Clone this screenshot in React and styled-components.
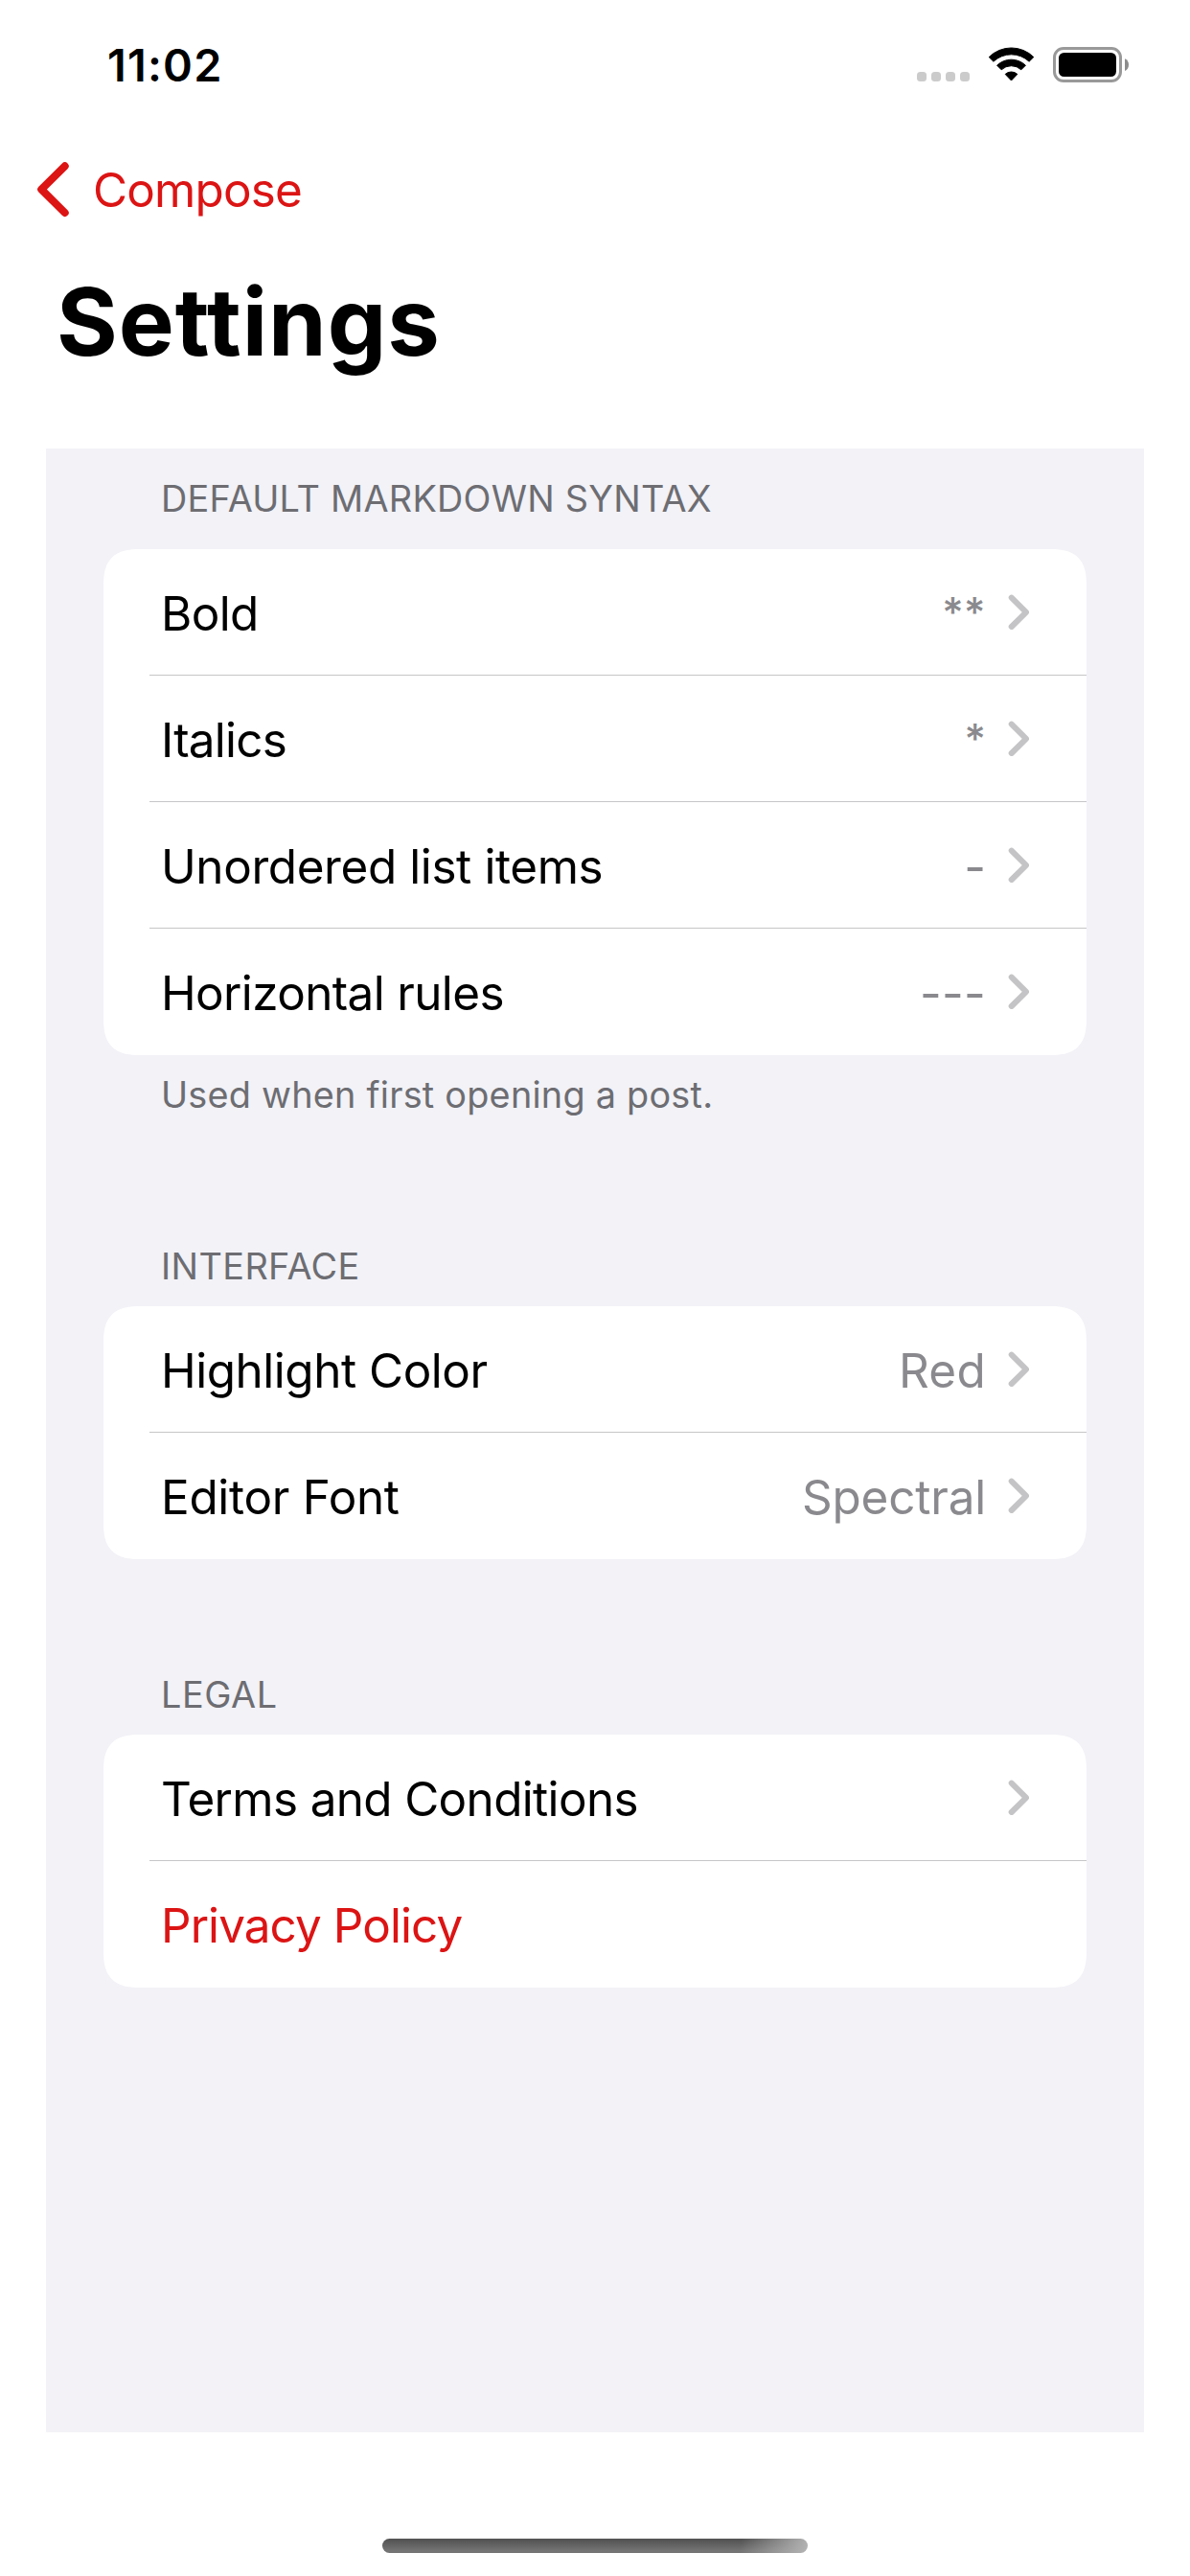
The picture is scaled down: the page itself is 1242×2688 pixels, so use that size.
import React from "react";
import styled, { createGlobalStyle } from "styled-components";

const GlobalStyle = createGlobalStyle`
  * { box-sizing: border-box; }
  body { margin: 0; background: #fff; }
`;

const Screen = styled.div`
  width: 1242px;
  height: 2688px;
  display: flex;
  flex-direction: column;
  background: #fff;
  color: #000;
  font-family: Inter, "Liberation Sans", sans-serif;
  white-space: nowrap;
  overflow: hidden;
`;

const StatusBar = styled.header`
  height: 136px;
  padding: 0 64px 0 112px;
  display: flex;
  align-items: center;
  justify-content: space-between;
`;

const Clock = styled.span`
  font-size: 46.8px;
  font-weight: 600;
  letter-spacing: 1.2px;
`;

const StatusIcons = styled.div`
  align-self: flex-start;
  height: 37px;
  margin-top: 49px;
  display: flex;
  align-items: flex-start;
  gap: 19px;

  svg { display: block; }
`;

const SignalDots = styled.div`
  align-self: flex-end;
  margin-bottom: 1px;
  display: flex;
  gap: 5px;
`;

const SignalDot = styled.i`
  width: 10px;
  height: 10px;
  border-radius: 3.5px;
  background: #cbcbcb;
`;

const NavBar = styled.nav`
  height: 124px;
  padding-left: 38px;
  display: flex;
  align-items: center;
  gap: 24px;
  color: #dc1414;
`;

const BackLabel = styled.span`
  font-size: 49.4px;
  letter-spacing: -0.81px;
`;

const Title = styled.h1`
  height: 152px;
  margin: 0 0 56px;
  padding-left: 59px;
  font-size: 97.5px;
  font-weight: 700;
  line-height: 152px;
  letter-spacing: 0.95px;
`;

const Panel = styled.main`
  height: 2070px;
  margin: 0 48px;
  padding: 0 60px;
  background: #f2f2f7;
`;

const Section = styled.section`
  margin-top: ${(p) => p.$gap}px;
`;

const SectionHeader = styled.h2`
  margin: 0;
  padding-left: 60px;
  height: ${(p) => p.$height}px;
  line-height: ${(p) => p.$height}px;
  font-size: 37.8px;
  font-weight: 400;
  letter-spacing: ${(p) => p.$tracking}px;
  color: #6d6d72;
`;

const SectionFooter = styled.p`
  margin: 0;
  padding-left: 60px;
  height: 82px;
  line-height: 82px;
  font-size: 37.8px;
  letter-spacing: 0.24px;
  color: #6d6d72;
`;

const Card = styled.div`
  padding-left: 48px;
  background: #fff;
  border-radius: 31px;

  @supports (corner-shape: superellipse(1.4)) {
    border-radius: 38px;
    corner-shape: superellipse(1.4);
  }
`;

const Row = styled.div`
  height: 132px;
  padding: 0 60px 0 12px;
  display: flex;
  align-items: center;
  border-bottom: 1px solid #c6c6c8;

  &:last-child { border-bottom-color: transparent; }
`;

const RowLabel = styled.span`
  flex: 1;
  padding-top: 3px;
  font-size: 49.4px;
  letter-spacing: ${(p) => p.$tracking}px;
  color: ${(p) => (p.$accent ? "#dc1414" : "#000")};
`;

const RowValue = styled.span`
  padding-top: 3px;
  margin-right: 23px;
  font-size: 49.4px;
  letter-spacing: ${(p) => p.$tracking || 0}px;
  color: #8a8a8e;
`;

const StarValue = styled(RowValue)`
  padding: 0 0 2px;
  font-size: 43px;
  font-weight: 500;
`;

const HomeArea = styled.footer`
  flex: 1;
  display: flex;
  justify-content: center;
  align-items: flex-end;
  padding-bottom: 24px;
`;

const HomeIndicator = styled.div`
  width: 444px;
  height: 15px;
  border-radius: 7.5px;
  background:
    linear-gradient(100deg, rgba(180, 180, 180, 0) 84%, #b4b4b4 100%),
    linear-gradient(180deg, #545454 10%, #747474 85%);
`;

const BackChevron = () => (
  <svg width="35" height="60" viewBox="0 0 35 60" fill="none">
    <path d="M29.7 5.3 5.2 29.6 29.7 54" stroke="currentColor" strokeWidth="8" strokeLinecap="round" strokeLinejoin="round" />
  </svg>
);

const Chevron = () => (
  <svg width="22" height="37" viewBox="0 0 22 37" fill="none">
    <path d="M3.7 3.6 19 18.8 3.7 34" stroke="#c4c4c6" strokeWidth="6" strokeLinecap="round" strokeLinejoin="round" />
  </svg>
);

const WifiIcon = () => (
  <svg width="49" height="37" viewBox="0 0 49 37" fill="#000" stroke="#000" strokeWidth="1" strokeLinejoin="round">
    <path d="M1.2 10.6A33 33 0 0 1 47.8 10.6L43.1 15.2A27.2 27.2 0 0 0 5.9 15.2Z" />
    <path d="M9.6 19.2A21.4 21.4 0 0 1 39.4 19.2L34.8 23.8A15 15 0 0 0 14.2 23.8Z" />
    <path d="M18.2 28.4A9.4 9.4 0 0 1 30.8 28.4L24.5 35Z" />
  </svg>
);

const BatteryIcon = () => (
  <svg width="79" height="37" viewBox="0 0 79 37">
    <rect x="1.5" y="1.5" width="69" height="34" rx="9.5" fill="none" stroke="#999" strokeWidth="3" />
    <rect x="6" y="6" width="60" height="25" rx="5.5" fill="#000" />
    <path d="M75 12.3C77.6 13.4 79 15.8 79 18.7S77.6 24 75 25.1Z" fill="#8c8c8c" />
  </svg>
);

const sections = [
  {
    title: "DEFAULT MARKDOWN SYNTAX",
    tracking: 0.25,
    gap: 0,
    height: 105,
    footer: "Used when first opening a post.",
    rows: [
      { label: "Bold", tracking: -0.63, value: "**", star: true, valueTracking: 0.5 },
      { label: "Italics", tracking: -0.76, value: "*", star: true },
      { label: "Unordered list items", tracking: -0.38, value: "-" },
      { label: "Horizontal rules", tracking: -0.61, value: "---", valueTracking: 0.28 },
    ],
  },
  {
    title: "INTERFACE",
    tracking: 0.41,
    gap: 96,
    height: 84,
    rows: [
      { label: "Highlight Color", tracking: -0.46, value: "Red", valueTracking: 0.3 },
      { label: "Editor Font", tracking: -0.28, value: "Spectral", valueTracking: -0.18 },
    ],
  },
  {
    title: "LEGAL",
    tracking: 0.55,
    gap: 99,
    height: 84,
    rows: [
      { label: "Terms and Conditions", tracking: -0.63 },
      { label: "Privacy Policy", tracking: -0.9, accent: true },
    ],
  },
];

export default function App() {
  return (
    <Screen>
      <GlobalStyle />
      <StatusBar>
        <Clock>11:02</Clock>
        <StatusIcons>
          <SignalDots>
            <SignalDot />
            <SignalDot />
            <SignalDot />
            <SignalDot />
          </SignalDots>
          <WifiIcon />
          <BatteryIcon />
        </StatusIcons>
      </StatusBar>
      <NavBar>
        <BackChevron />
        <BackLabel>Compose</BackLabel>
      </NavBar>
      <Title>Settings</Title>
      <Panel>
        {sections.map((s) => (
          <Section key={s.title} $gap={s.gap}>
            <SectionHeader $height={s.height} $tracking={s.tracking}>{s.title}</SectionHeader>
            <Card>
              {s.rows.map((r) => {
                const Value = r.star ? StarValue : RowValue;
                return (
                  <Row key={r.label}>
                    <RowLabel $tracking={r.tracking} $accent={r.accent}>{r.label}</RowLabel>
                    {r.value && <Value $tracking={r.valueTracking}>{r.value}</Value>}
                    {!r.accent && <Chevron />}
                  </Row>
                );
              })}
            </Card>
            {s.footer && <SectionFooter>{s.footer}</SectionFooter>}
          </Section>
        ))}
      </Panel>
      <HomeArea>
        <HomeIndicator />
      </HomeArea>
    </Screen>
  );
}
